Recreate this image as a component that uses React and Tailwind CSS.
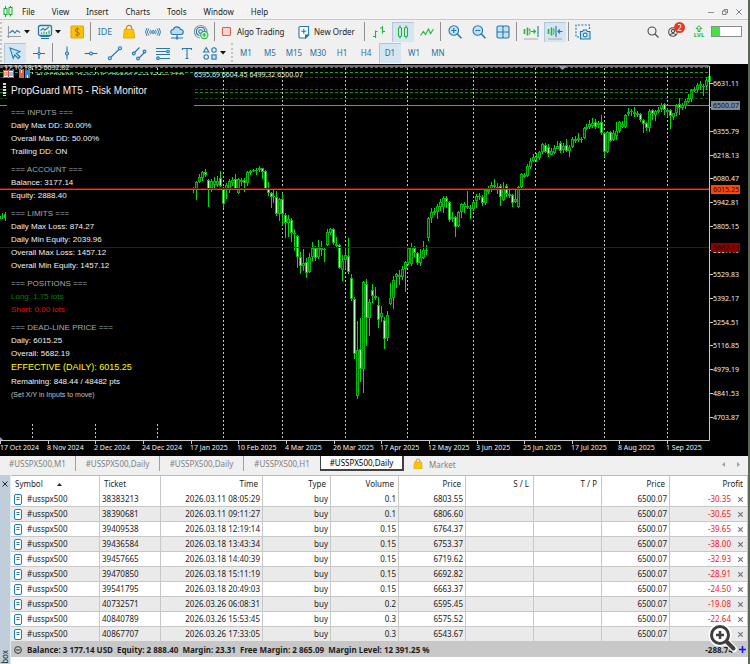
import React, { useState } from 'react';

const menuItems = ['File', 'View', 'Insert', 'Charts', 'Tools', 'Window', 'Help'];
const timeframes = ['M1', 'M5', 'M15', 'M30', 'H1', 'H4', 'D1', 'W1', 'MN'];

// y positions on the chart: high, body top, body bottom, low, falling
const candles = [
  [187, 188, 190, 193, 0], [181, 182, 189, 200, 0], [174, 177, 182, 183, 0], [171, 172, 178, 181, 0],
  [169, 172, 175, 177, 1], [179, 180, 189, 207, 1], [179, 181, 188, 192, 0], [177, 181, 185, 188, 0],
  [176, 181, 185, 187, 0], [171, 178, 186, 187, 1], [187, 188, 204, 208, 1], [183, 185, 189, 199, 0],
  [179, 181, 190, 193, 0], [177, 180, 183, 186, 0], [174, 179, 189, 190, 1], [178, 179, 193, 194, 0],
  [178, 180, 182, 186, 0], [178, 180, 183, 192, 1], [171, 172, 183, 186, 0], [170, 171, 173, 175, 0],
  [169, 170, 171, 172, 0], [168, 170, 171, 175, 0], [166, 168, 170, 172, 0], [168, 168, 172, 179, 1],
  [170, 171, 189, 190, 1], [182, 189, 193, 196, 1], [192, 193, 197, 208, 1], [190, 196, 197, 203, 0],
  [191, 197, 214, 216, 1], [198, 199, 214, 221, 0], [193, 199, 214, 225, 1], [213, 215, 223, 238, 1],
  [215, 219, 223, 237, 0], [218, 220, 233, 242, 1], [229, 233, 234, 251, 0], [235, 236, 257, 268, 1],
  [252, 257, 266, 274, 1], [249, 263, 266, 271, 0], [258, 262, 273, 278, 1], [253, 257, 272, 273, 0],
  [242, 248, 257, 261, 0], [246, 248, 258, 261, 1], [240, 248, 257, 259, 0], [241, 248, 250, 256, 0],
  [248, 249, 250, 262, 0], [229, 232, 245, 246, 0], [228, 229, 233, 235, 0], [228, 229, 243, 245, 1],
  [237, 244, 246, 248, 0], [244, 245, 268, 269, 1], [255, 261, 270, 281, 0], [248, 255, 260, 269, 0],
  [238, 256, 272, 274, 1], [274, 278, 299, 301, 1], [297, 299, 354, 359, 1], [321, 350, 396, 399, 0],
  [318, 349, 369, 382, 1], [281, 282, 369, 393, 0], [279, 284, 318, 346, 1], [299, 302, 318, 336, 0],
  [284, 290, 296, 303, 1], [287, 296, 298, 300, 1], [297, 305, 320, 328, 1], [306, 313, 317, 322, 0],
  [317, 320, 339, 349, 1], [311, 315, 338, 341, 0], [283, 298, 304, 305, 0], [276, 280, 298, 309, 0],
  [273, 274, 277, 288, 0], [270, 275, 277, 285, 0], [266, 269, 277, 280, 0], [261, 262, 269, 292, 0],
  [247, 248, 263, 265, 0], [243, 247, 264, 266, 0], [246, 248, 253, 257, 1], [252, 253, 263, 265, 1],
  [249, 257, 263, 266, 0], [241, 250, 258, 259, 0], [245, 250, 251, 255, 0], [217, 218, 238, 241, 0],
  [208, 212, 218, 223, 0], [208, 211, 213, 215, 0], [204, 206, 212, 219, 0], [199, 202, 207, 211, 0],
  [196, 198, 207, 213, 0], [196, 198, 202, 208, 1], [201, 202, 220, 222, 1], [212, 217, 219, 222, 0],
  [216, 217, 227, 237, 1], [211, 212, 226, 227, 0], [203, 204, 212, 218, 0], [202, 204, 207, 213, 0],
  [191, 206, 208, 209, 0], [205, 208, 209, 219, 0], [201, 202, 209, 211, 0], [194, 196, 201, 208, 0],
  [193, 196, 197, 200, 0], [195, 197, 203, 206, 1], [188, 190, 203, 205, 0], [186, 190, 192, 194, 0],
  [182, 185, 190, 192, 0], [179, 185, 187, 190, 0], [183, 187, 189, 194, 0], [184, 186, 197, 206, 1],
  [182, 189, 200, 201, 0], [184, 186, 194, 197, 1], [188, 194, 196, 198, 0], [194, 195, 203, 207, 1],
  [189, 199, 202, 203, 0], [186, 187, 207, 208, 0], [173, 174, 187, 188, 0], [173, 175, 177, 178, 0],
  [164, 166, 176, 177, 0], [158, 161, 167, 169, 0], [154, 157, 161, 162, 0], [153, 157, 158, 162, 0],
  [151, 152, 158, 160, 0], [143, 144, 152, 154, 0], [143, 145, 152, 153, 1], [144, 147, 154, 157, 1],
  [148, 151, 155, 155, 0], [145, 148, 153, 154, 0], [141, 146, 149, 149, 0], [141, 143, 151, 153, 1],
  [143, 146, 150, 153, 0], [139, 145, 151, 152, 1], [145, 147, 151, 157, 0], [137, 139, 147, 148, 0],
  [136, 139, 141, 143, 0], [133, 138, 140, 142, 0], [137, 139, 140, 143, 0], [127, 128, 138, 139, 0],
  [124, 127, 129, 130, 0], [120, 124, 127, 129, 0], [118, 123, 126, 128, 0], [119, 122, 127, 129, 1],
  [121, 123, 125, 128, 0], [115, 122, 133, 135, 1], [132, 133, 152, 157, 1], [131, 132, 152, 153, 0],
  [131, 132, 141, 142, 1], [130, 133, 140, 141, 0], [122, 131, 136, 140, 0], [121, 122, 131, 133, 0],
  [121, 124, 127, 128, 0], [114, 115, 127, 128, 0], [108, 112, 114, 116, 0], [109, 111, 112, 116, 0],
  [107, 112, 114, 117, 0], [111, 113, 115, 117, 0], [113, 114, 120, 122, 1], [119, 120, 124, 133, 1],
  [122, 123, 128, 131, 1], [109, 111, 128, 132, 0], [109, 110, 114, 120, 1], [110, 111, 115, 121, 0],
  [107, 110, 112, 113, 0], [103, 105, 109, 112, 0], [103, 104, 110, 115, 1], [108, 110, 112, 117, 0],
  [109, 110, 116, 129, 1], [113, 113, 117, 120, 0], [104, 106, 113, 116, 0], [98, 104, 108, 115, 1],
  [103, 105, 108, 110, 0], [99, 101, 106, 109, 0], [94, 98, 102, 103, 0], [89, 90, 99, 102, 0],
  [87, 89, 91, 92, 0], [83, 85, 90, 92, 0], [81, 84, 86, 90, 0], [84, 86, 87, 96, 0],
  [77, 80, 86, 90, 0], [74, 76, 82, 84, 0],
];

const priceLabels = [
  '6631.11', '', '6355.79', '6218.13', '6080.47', '5942.81', '5805.15', '5667.49',
  '5529.83', '5392.17', '5254.51', '5116.85', '4979.19', '4841.53', '4703.87',
];

const dateLabels = [
  '17 Oct 2024', '8 Nov 2024', '2 Dec 2024', '24 Dec 2024', '17 Jan 2025', '10 Feb 2025', '4 Mar 2025', '26 Mar 2025',
  '17 Apr 2025', '12 May 2025', '3 Jun 2025', '25 Jun 2025', '17 Jul 2025', '8 Aug 2025', '1 Sep 2025',
];

const separators = [32, 95, 157, 223, 282, 345, 407, 473, 535, 604, 667];

const levels = [
  [67, '#1fa01f'], [72, '#1fa01f'], [77, '#0c5f0c'], [89, '#0c6a0c'], [92, '#178c17'], [98, '#0a4f0a'],
];

const priceTags = [
  { y: 105, label: '6500.07', color: '#7a8a9c' },
  { y: 189, label: '6015.25', color: '#ff4500' },
  { y: 247, label: '5682.19', color: '#8b0000' },
];

const monitor = [
  { title: 'INPUTS', rows: ['Daily Max DD: 30.00%', 'Overall Max DD: 50.00%', 'Trailing DD: ON'] },
  { title: 'ACCOUNT', rows: ['Balance: 3177.14', 'Equity: 2888.40'] },
  { title: 'LIMITS', rows: ['Daily Max Loss: 874.27', 'Daily Min Equity: 2039.96', 'Overall Max Loss: 1457.12', 'Overall Min Equity: 1457.12'] },
  { title: 'POSITIONS', rows: ['Long: 1.75 lots', 'Short: 0.00 lots'] },
  { title: 'DEAD-LINE PRICE', rows: ['Daily: 6015.25', 'Overall: 5682.19'] },
];

const rowColor = (row) => {
  if (row.startsWith('Long')) return 'text-[#008000]';
  if (row.startsWith('Short')) return 'text-[#ff0000]';
  return 'text-[#f0f0f0]';
};

const positions = [
  ['38383213', '2026.03.11 08:05:29', '0.1', '6803.55', '-30.35'],
  ['38390681', '2026.03.11 09:11:27', '0.1', '6806.60', '-30.65'],
  ['39409538', '2026.03.18 12:19:14', '0.15', '6764.37', '-39.65'],
  ['39436584', '2026.03.18 13:43:34', '0.15', '6753.37', '-38.00'],
  ['39457665', '2026.03.18 14:40:39', '0.15', '6719.62', '-32.93'],
  ['39470850', '2026.03.18 15:11:19', '0.15', '6692.82', '-28.91'],
  ['39541795', '2026.03.18 20:49:03', '0.15', '6663.37', '-24.50'],
  ['40732571', '2026.03.26 06:08:31', '0.2', '6595.45', '-19.08'],
  ['40840789', '2026.03.26 15:53:45', '0.3', '6575.52', '-22.64'],
  ['40867707', '2026.03.26 17:33:05', '0.3', '6543.67', ''],
];

const Icon = ({ children, color = '#2478b0' }) => (
  <svg viewBox="0 0 16 16" className="size-4 shrink-0" fill="none" stroke={color} strokeWidth="1.1" aria-hidden="true">
    {children}
  </svg>
);

const Caret = () => (
  <svg viewBox="0 0 6 4" className="w-1.5 h-1 shrink-0" aria-hidden="true">
    <path d="M0 0h6L3 3.5z" fill="#111" />
  </svg>
);

const Tool = ({ label, active, children }) => (
  <button
    aria-label={label}
    className={`w-[22px] h-5 shrink-0 flex items-center justify-center ${active ? 'bg-[#d5e5f2] shadow-[inset_1px_1px_0_#b4c6d6]' : ''}`}
  >
    {children}
  </button>
);

const DropTool = ({ label, children }) => (
  <button aria-label={label} className="w-[29px] h-5 pl-0.5 gap-0.5 shrink-0 flex items-center">
    {children}
    <Caret />
  </button>
);

const Sep = () => <div className="w-px h-[19px] mr-px shrink-0 bg-[#909090]" />;
const Grip = () => <div className="w-0.5 h-[19px] shrink-0 border-l-2 border-dotted border-[#c4c4c4]" />;

const Bag = () => (
  <>
    <path d="M5.4 6V4a2.6 2.6 0 0 1 5.2 0v2" stroke="#c98e00" strokeWidth="1.2" />
    <path d="M3.4 5.4h9.2l1 8.6H2.4z" fill="#ffc400" stroke="#dba000" strokeWidth="0.8" />
  </>
);

const MenuBar = () => (
  <header className="h-5 flex items-center border-b border-[#c8c8c8] bg-[#f3f3f3] pt-1 pl-[3px] pr-1.5">
    <svg viewBox="0 0 10 11" className="w-2.5 h-[11px]" fill="none" stroke="#18b030" aria-hidden="true">
      <path d="M2.5 0v2M2.5 9v2M7.5 0v1.5M7.5 8.5v2" />
      <rect x="1" y="2.5" width="3" height="6" />
      <rect x="6" y="1.5" width="3" height="7" />
    </svg>
    <nav className="flex gap-[17px] pl-[9px] text-[#1c1c1c]">
      {menuItems.map(item => <button key={item}>{item}</button>)}
    </nav>
    <div className="ml-auto flex gap-2">
      <button aria-label="Minimize">
        <svg viewBox="0 0 6 6" className="size-1.5" stroke="#909090"><path d="M0 3.5h6" /></svg>
      </button>
      <button aria-label="Restore">
        <svg viewBox="0 0 6 6" className="size-1.5" stroke="#808080" fill="none"><path d="M.5 2h3.5v3.5H.5zM2 2V.5h3.5V4H4" /></svg>
      </button>
      <button aria-label="Close">
        <svg viewBox="0 0 6 6" className="size-1.5" stroke="#808080"><path d="M.3.3l5.4 5.4M5.7.3L.3 5.7" /></svg>
      </button>
    </div>
  </header>
);

const MainToolbar = () => (
  <div className="h-[23px] flex items-center gap-0.5 pr-1.5">
    <Grip />
    <DropTool label="New chart">
      <Icon>
        <path d="M2.5 2v12M1 12.5h14" stroke="#9a9a9a" />
        <path d="M3.5 9l3-2.5 2.5 2.5 2-2.5 3 2" />
      </Icon>
    </DropTool>
    <DropTool label="Profiles">
      <Icon>
        <rect x="1.5" y="1.5" width="13" height="10" rx="1.5" strokeWidth="1.3" />
        <path d="M4 14.5h8M3.5 12.5h9" />
        <path d="M3.5 6.5l2.5-2 2 1.5 4-3" />
        <path d="M4.5 10V8.5M7 10V7.5M9.5 10V8M12 10V6.5" stroke="#22b43c" />
      </Icon>
    </DropTool>
    <Tool label="Deposit">
      <Icon>
        <rect x="2" y="2" width="12.5" height="12" rx="1" fill="#ffc107" stroke="#e0a500" />
        <path d="M10.3 5.5C9.8 4.8 9 4.6 8.2 4.6c-1.2 0-2 .6-2 1.6 0 2.3 4.2 1.2 4.2 3.5 0 1-.9 1.7-2.2 1.7-1 0-1.9-.4-2.3-1.2M8.2 3.4v9.2" stroke="#94690a" strokeWidth="0.9" />
      </Icon>
    </Tool>
    <Sep />
    <Tool label="MetaEditor IDE"><span className="text-[9px] text-[#2478b0]">IDE</span></Tool>
    <Tool label="Market"><Icon><Bag /></Icon></Tool>
    <Tool label="Signals">
      <Icon>
        <circle cx="8" cy="8" r="1.3" />
        <path d="M5.7 5.8a3.2 3.2 0 0 0 0 4.4M10.3 5.8a3.2 3.2 0 0 1 0 4.4M3.8 4.5a5.5 5.5 0 0 0 0 7M12.2 4.5a5.5 5.5 0 0 1 0 7M1.9 4a7 7 0 0 0 0 8M14.1 4a7 7 0 0 1 0 8" strokeWidth="0.9" />
      </Icon>
    </Tool>
    <Tool label="Virtual hosting">
      <Icon>
        <path d="M4.3 10.5a2.5 2.5 0 0 1 0-5 3.8 3.8 0 0 1 7.2 0 2.5 2.5 0 0 1 .5 5z" fill="#b9dcf2" />
        <path d="M8 10.5v3M2 14h4.5M9.5 14H14" />
        <circle cx="8" cy="14" r="1" />
      </Icon>
    </Tool>
    <Tool label="VPS">
      <Icon>
        <path d="M14 8A6.3 6.3 0 1 0 7 14" stroke="#7b98ab" />
        <path d="M11.8 7A4.2 4.2 0 1 0 6.5 11.5" />
        <circle cx="7.6" cy="7.5" r="1.8" />
        <circle cx="11.3" cy="11" r="3.6" fill="#d9f7dd" stroke="#22b43c" />
        <path d="M11.3 9v4M9.3 11h4" stroke="#22b43c" />
      </Icon>
    </Tool>
    <Sep />
    <button className="w-[74px] h-5 pl-1 shrink-0 flex items-center gap-1.5 whitespace-nowrap">
      <span className="size-[9px] rounded-[1px] border border-[#dc5a4c] bg-[#fbd3cd]" />
      Algo Trading
    </button>
    <button className="w-[68px] h-5 pl-0.5 shrink-0 flex items-center gap-0.5 whitespace-nowrap">
      <Icon>
        <path d="M4 2.5h8.5v8.5l-3 3H4q-1 0-1-1v-9.5q0-1 1-1z" fill="#fff" />
        <path d="M12.5 11h-3v3z" fill="#2478b0" />
        <path d="M7.8 4.8v5M5.3 7.3h5" />
      </Icon>
      New Order
    </button>
    <Sep />
    <Tool label="Bar chart">
      <Icon color="#22b43c">
        <path d="M4.5 6.5v7.5M2 12.5h2.5M4.5 7.5h2M11.5 2v7.5M9 4h2.5M11.5 7.5h2.5" />
      </Icon>
    </Tool>
    <Tool label="Candlesticks" active>
      <Icon color="#22b43c">
        <path d="M5 1.5v2M5 12.5v2M11 1.5v2M11 12.5v2" />
        <rect x="3.5" y="3.5" width="3" height="9" rx="1" />
        <rect x="9.5" y="3.5" width="3" height="9" rx="1" />
      </Icon>
    </Tool>
    <Tool label="Line chart">
      <Icon color="#22b43c"><path d="M1.5 11.5l3-4 2 3 3-5.5 2 4.5 3-4.5" /></Icon>
    </Tool>
    <Sep />
    <Tool label="Zoom in">
      <Icon>
        <circle cx="6.8" cy="6.5" r="4.8" fill="#c5e2f4" />
        <path d="M10.4 10l4 4.2" strokeWidth="1.6" />
        <path d="M6.8 4v5M4.3 6.5h5" />
      </Icon>
    </Tool>
    <Tool label="Zoom out">
      <Icon>
        <circle cx="6.8" cy="6.5" r="4.8" fill="#c5e2f4" />
        <path d="M10.4 10l4 4.2" strokeWidth="1.6" />
        <path d="M4.3 6.5h5" />
      </Icon>
    </Tool>
    <Tool label="Tile windows">
      <Icon>
        <rect x="2" y="2" width="12" height="12" rx="1.5" fill="#c5e2f4" />
        <path d="M8 2v12M2 8h12" />
      </Icon>
    </Tool>
    <Sep />
    <Tool label="Auto scroll">
      <Icon color="#22b43c">
        <path d="M1.5 5v5M4.5 3.5v8" strokeWidth="1.6" />
        <path d="M6.5 4.5q1.2 3 0 6M8 7.5h4.5M10.5 5.5l2 2-2 2" />
        <path d="M15 2v11" stroke="#2478b0" />
        <path d="M1 15h14" stroke="#b0b0b0" />
      </Icon>
    </Tool>
    <Tool label="Chart shift" active>
      <Icon color="#22b43c">
        <path d="M1.5 5v5M4.5 3.5v8" strokeWidth="1.6" />
        <path d="M6.5 4.5q1.2 3 0 6" />
        <path d="M9 2v11M15.5 7.5h-4.5M13 5.5l-2 2 2 2" stroke="#2478b0" />
        <path d="M1 15h14" stroke="#b0b0b0" />
      </Icon>
    </Tool>
    <Sep />
    <Tool label="Screenshot">
      <Icon>
        <path d="M4 13H1V1h13.5v4" strokeDasharray="2 1.4" />
        <path d="M5.5 7.5h2l1-1.5h3l1 1.5h2.5v7.5h-9.5z" fill="#c5e2f4" />
        <circle cx="10.2" cy="11" r="1.9" fill="#fff" />
      </Icon>
    </Tool>
    <div className="ml-auto flex items-center">
      <button aria-label="Search" className="w-6 flex justify-center">
        <Icon color="#4a4a4a">
          <circle cx="7" cy="7" r="4" />
          <path d="M10 10l3.5 3.5" />
        </Icon>
      </button>
      <button aria-label="Notifications" className="relative w-6 flex items-center">
        <Icon color="#4a4a4a">
          <circle cx="8" cy="8" r="4.3" />
          <circle cx="8" cy="7" r="1.6" />
          <path d="M5 11q3-3 6 0" />
        </Icon>
        <span className="absolute left-[9px] -top-0.5 size-[11px] rounded-full bg-[#e23b24] text-white leading-[11px] text-center">2</span>
      </button>
      <button aria-label="Level" className="w-5 flex flex-col items-center text-[#22b43c] text-[6px] leading-[6px] font-bold">
        <svg viewBox="0 0 8 7" className="w-2 h-[7px]" fill="none" stroke="#22b43c"><path d="M4 .7L6.8 3.5H5v3H3v-3H1.2z" /></svg>
        LVL
      </button>
      <div className="w-[31px] h-[11px] ml-0.5 border border-[#8c8c8c] bg-white">
        <div className="w-2 h-full bg-[#44e044]" />
      </div>
    </div>
  </div>
);

const DrawToolbar = ({ timeframe, setTimeframe }) => (
  <div className="h-[21px] flex items-start gap-0.5">
    <Grip />
    <Tool label="Cursor" active>
      <Icon><path d="M3 3l10 3.5-3.5 1.8 3.5 3.5-1.7 1.7-3.5-3.5-1.6 3.3z" fill="#c5e2f4" /></Icon>
    </Tool>
    <Tool label="Crosshair">
      <Icon><path d="M8 2v12M2 8.5h12" /><circle cx="8" cy="8.5" r="1.2" fill="#f0f0f0" /></Icon>
    </Tool>
    <Sep />
    <Tool label="Vertical line">
      <Icon><path d="M8 1.5v13" /><circle cx="8" cy="8.5" r="1.5" fill="#c5e2f4" /></Icon>
    </Tool>
    <Tool label="Horizontal line">
      <Icon><path d="M1.5 8.5h13" /><circle cx="8" cy="8.5" r="1.5" fill="#c5e2f4" /></Icon>
    </Tool>
    <Tool label="Trendline">
      <Icon><path d="M3 13L13 3.5" /><circle cx="2.8" cy="13.2" r="1.5" fill="#c5e2f4" /><circle cx="13" cy="3.2" r="1.5" fill="#c5e2f4" /></Icon>
    </Tool>
    <Tool label="Channel">
      <Icon>
        <path d="M2.5 8.5l6-6M7.5 13.5L14 7" />
        <circle cx="2.8" cy="8.5" r="1.4" fill="#c5e2f4" /><circle cx="13.5" cy="6.5" r="1.4" fill="#c5e2f4" /><circle cx="7" cy="13.5" r="1.4" fill="#c5e2f4" />
      </Icon>
    </Tool>
    <Tool label="Fibonacci">
      <Icon>
        <path d="M1 3.5h14M1 6.5h10M1 9.5h14M5 13.5h10" />
        <circle cx="13" cy="6.5" r="1.3" fill="#c5e2f4" /><circle cx="3" cy="13.2" r="1.3" fill="#c5e2f4" />
      </Icon>
    </Tool>
    <Tool label="Text"><Icon><path d="M3.5 5V3.5h9V5M8 3.5v10M6.5 13.5h3" /></Icon></Tool>
    <DropTool label="Objects">
      <Icon>
        <path d="M4.2 2.5L6.8 7H1.6z" />
        <circle cx="12" cy="5" r="2.2" />
        <circle cx="4.2" cy="12" r="2.2" />
        <rect x="9.9" y="9.9" width="4.2" height="4.2" fill="#c5e2f4" />
      </Icon>
    </DropTool>
    <Grip />
    {timeframes.map(tf => (
      <button
        key={tf}
        onClick={() => setTimeframe(tf)}
        className={`w-[22px] h-5 shrink-0 text-center text-[#2a6f9e] ${tf === timeframe ? 'bg-[#d5e5f2] shadow-[inset_1px_1px_0_#b4c6d6]' : ''}`}
      >
        {tf}
      </button>
    ))}
  </div>
);

const Candles = () => (
  <g shapeRendering="crispEdges">
    {candles.map(([high, top, bottom, low, falling], index) => {
      const x = Math.round(193 + index * 2.981);
      const height = Math.max(bottom - top, 1);
      return (
        <g key={index}>
          <rect x={x} y={high} width="1" height={low - high} fill="#00dc0a" />
          <rect x={x - 1} y={top} width={3} height={height} fill={falling ? '#14b414' : '#00b80a'} />
          {height > 2 && (
            <rect x={x} y={top + 1} width="1" height={height - 2} fill={falling ? '#b8ffb8' : '#004600'} />
          )}
        </g>
      );
    })}
  </g>
);

const Chart = () => (
  <section className="relative bg-black" aria-label="#USSPX500 Daily chart">
    <svg viewBox="0 64 748 392" className="block w-full" fontFamily='"Noto Sans", sans-serif' fontSize="7">
      <rect x="0" y="65" width="709" height="2" fill="#6e6e6e" />
      {levels.map(([y, color]) => (
        <path key={y} d={`M0 ${y + 0.5}H709`} stroke={color} strokeDasharray="3 2" />
      ))}
      {separators.map(x => (
        <path key={x} d={`M${x + 0.5} 68V440`} stroke="#c4c4c4" strokeDasharray="2 2" />
      ))}
      <path d="M0 105.5H709" stroke="#788694" />
      <path d="M558 66h9l-4.5 4z" fill="#8e9bab" />

      {/* symbol caption, partly under the monitor panel */}
      <text x="4" y="70" fill="#e8e8e8">17.10.18:15 6632.82</text>
      <text x="36" y="78" fill="#e8e8e8">#USSPX500, Daily: US SPX500 Spot Index CFD</text>
      <rect x="7" y="75" width="187" height="348" fill="#000" />
      <text x="194" y="77" fill="#f0f0f0">6595.69 6604.45 6499.32 6500.07</text>
      <rect x="3" y="70" width="11" height="8" fill="#fff" />
      <path d="M3.5 70.5h5v7h-5zM4 73h4M4 75h4" stroke="#d8483c" fill="none" />
      <path d="M9 70.5h4.5v7H9M9 73h4M9 75h4" stroke="#3a78b8" fill="none" />
      <rect x="19" y="70" width="5" height="8" fill="#e0604e" />
      <rect x="25" y="70" width="5" height="8" fill="#3a88c0" />
      <path d="M21.5 70v3M27.5 75v3" stroke="#fff" />
      <path d="M4.5 83v13" stroke="#ddd" strokeWidth="3" strokeDasharray="2 1" />
      <path d="M.5 216v3M2.500 213v6M4.500 214v4M5.500 212v9" stroke="#00dc0a" />

      <Candles />

      <path d="M0 247.5H709" stroke="#6e0000" />
      <path d="M0 188.5H709" stroke="#7a0c00" />
      <path d="M0 189.5H709" stroke="#ff3a12" />

      {/* axes */}
      <path d="M709.5 66V440.5H0" stroke="#c8c8c8" fill="none" />
      <path d="M0 437l3 3H0z" fill="#8e9bab" />
      {priceLabels.map((label, index) => {
        const y = Math.round(83 + index * 23.85);
        return (
          <g key={index}>
            <path d={`M710 ${y + 0.5}h3`} stroke="#c8c8c8" />
            <text x="713" y={y + 3} fill="#f0f0f0">{label}</text>
          </g>
        );
      })}
      {priceTags.map(tag => (
        <g key={tag.label}>
          <rect x="711" y={tag.y - 4} width="29" height="9" fill={tag.color} />
          <text x="713" y={tag.y + 3} fill="#111">{tag.label}</text>
        </g>
      ))}
      {dateLabels.map((label, index) => {
        const x = Math.round(index * 47.65);
        return (
          <g key={label}>
            <path d={`M${x + 0.5} 441v3`} stroke="#c8c8c8" />
            <text x={index === 0 ? 0 : x - 1} y="450" fill="#f0f0f0">{label}</text>
          </g>
        );
      })}
    </svg>

    {/* PropGuard overlay */}
    <div className="absolute left-[11px] top-5 font-['Liberation_Sans',Arial,sans-serif] leading-[13px] text-[#f0f0f0]">
      <h1 className="text-[10px] leading-[14px] mb-2">PropGuard MT5 - Risk Monitor</h1>
      {monitor.map(section => (
        <div key={section.title} className="mb-[5px] last-of-type:mb-0">
          <h2 className="text-[#a8a8a8]">=== {section.title} ===</h2>
          {section.rows.map(row => <p key={row} className={rowColor(row)}>{row}</p>)}
        </div>
      ))}
      <p className="text-[9px] leading-[15px] text-[#ffff00]">EFFECTIVE (DAILY): 6015.25</p>
      <p>Remaining: 848.44 / 48482 pts</p>
      <p className="text-[7px] text-[#c0c0c0]">(Set X/Y in Inputs to move)</p>
    </div>
  </section>
);

const ChartTabs = () => (
  <nav className="h-[19px] flex items-start bg-[#f0f0f0] text-[#808080] leading-[15px]">
    <button className="w-[76px] h-[15px] shrink-0 border-r border-[#a0a0a0]">#USSPX500,M1</button>
    <button className="w-[84px] h-[15px] shrink-0 border-r border-[#a0a0a0]">#USSPX500,Daily</button>
    <button className="w-[84px] h-[15px] shrink-0 border-r border-[#a0a0a0]">#USSPX500,Daily</button>
    <button className="w-[76px] h-[15px] shrink-0">#USSPX500,H1</button>
    <button className="w-[84px] h-[15px] shrink-0 border-l border-r-2 border-b-2 border-[#404040] bg-white text-black leading-[14px]">#USSPX500,Daily</button>
    <button className="h-4 ml-2 shrink-0 flex items-center gap-[5px]">
      <svg viewBox="0 0 16 16" className="size-3" fill="none" aria-hidden="true"><Bag /></svg>
      Market
    </button>
    <div className="ml-auto mr-2 h-4 flex items-center gap-3">
      <button aria-label="Previous tab"><svg viewBox="0 0 3 5" className="w-[3px] h-[5px]"><path d="M3 0v5L0 2.5z" fill="#a0a0a0" /></svg></button>
      <button aria-label="Next tab"><svg viewBox="0 0 3 5" className="w-[3px] h-[5px]"><path d="M0 0v5l3-2.5z" fill="#a0a0a0" /></svg></button>
    </div>
  </nav>
);

const Th = ({ children }) => (
  <th className="border-r border-[#c8c8c8] pr-1 text-right font-normal">{children}</th>
);

const Td = ({ children }) => (
  <td className="border-r border-b border-[#c8c8c8] pr-0.5 text-right">{children}</td>
);

const Toolbox = () => (
  <section className="flex bg-white text-[#1c1c1c]">
    <aside className="w-[11px] shrink-0 flex flex-col items-center justify-between bg-[#c0cddb] border-r border-[#e4e9ee] pt-1.5">
      <button aria-label="Close toolbox">
        <svg viewBox="0 0 6 6" className="size-1.5" stroke="#222"><path d="M.5.5l5 5M5.5.5l-5 5" /></svg>
      </button>
      <span className="[writing-mode:vertical-rl] rotate-180 leading-[10px]">box</span>
    </aside>
    <div className="flex-1 min-w-0 pb-[7px]">
      <table className="w-full table-fixed border-separate border-spacing-0 border-t border-[#b8b8b8]">
        <colgroup>
          <col className="w-[89px]" />
          <col className="w-[61px]" />
          <col className="w-[102px]" />
          <col className="w-[68px]" />
          <col className="w-[68px]" />
          <col className="w-[67px]" />
          <col className="w-[68px]" />
          <col className="w-[68px]" />
          <col className="w-[68px]" />
          <col />
        </colgroup>
        <thead>
          <tr className="h-4">
            <th className="border-r border-[#c8c8c8] pl-1 text-left font-normal">
              <span className="flex items-center gap-3.5">
                Symbol
                <svg viewBox="0 0 5 3" className="w-[5px] h-[3px]"><path d="M0 3h5L2.5 0z" fill="#222" /></svg>
              </span>
            </th>
            <th className="border-r border-[#c8c8c8] pl-1 text-left font-normal">Ticket</th>
            <Th>Time</Th>
            <Th>Type</Th>
            <Th>Volume</Th>
            <Th>Price</Th>
            <Th>S / L</Th>
            <Th>T / P</Th>
            <Th>Price</Th>
            <Th>Profit</Th>
          </tr>
        </thead>
        <tbody>
          {positions.map(([ticket, time, volume, price, profit]) => (
            <tr key={ticket} className="h-[15px] leading-[14px] even:bg-[#eaeaea]">
              <td className="border-r border-b border-[#c8c8c8] pl-[3px]">
                <span className="flex items-center gap-[5px]">
                  <svg viewBox="0 0 8 11" className="w-2 h-[11px]" fill="#fff" stroke="#2478b0" aria-hidden="true">
                    <rect x=".5" y=".5" width="7" height="10" rx="1.5" />
                    <path d="M2.5 3.5h3M2.5 5.5h3" />
                  </svg>
                  #usspx500
                </span>
              </td>
              <td className="border-r border-b border-[#c8c8c8] pl-0.5">{ticket}</td>
              <Td>{time}</Td>
              <Td>buy</Td>
              <Td>{volume}</Td>
              <Td>{price}</Td>
              <Td />
              <Td />
              <Td>6500.07</Td>
              <Td>
                <span className="flex items-center justify-end gap-[7px] pr-0.5 text-[#f0201c]">
                  {profit}
                  <button aria-label={`Close ${ticket}`}>
                    <svg viewBox="0 0 5 5" className="size-[5px]" stroke="#707070" strokeWidth="1.2"><path d="M.3.3l4.4 4.4M4.7.3L.3 4.7" /></svg>
                  </button>
                </span>
              </Td>
            </tr>
          ))}
        </tbody>
      </table>
      <div className="relative h-[15px] flex items-center bg-[#c8c8c8] pl-[3px] pr-0.5 font-bold whitespace-pre">
        <svg viewBox="0 0 8 8" className="size-2 mr-[5px]" fill="none" stroke="#333"><circle cx="4" cy="4" r="3.4" /><path d="M2 4h4" /></svg>
        <span>{'Balance: 3 177.14 USD  Equity: 2 888.40  Margin: 23.31  Free Margin: 2 865.09  Margin Level: 12 391.25 %'}</span>
        <span className="ml-auto mr-1.5">-288.74</span>
        <button aria-label="Add">
          <svg viewBox="0 0 7 7" className="size-[7px]" stroke="#1010ff" strokeWidth="1.5"><path d="M3.5 0v7M0 3.5h7" /></svg>
        </button>
        <button aria-label="Enlarge" className="absolute right-[10px] bottom-1">
          <svg viewBox="0 0 30 30" className="size-[30px]" fill="none" strokeLinecap="round">
            <circle cx="12" cy="12" r="8.5" stroke="#fff" strokeWidth="6" />
            <path d="M19 19l7 7" stroke="#fff" strokeWidth="6.5" />
            <circle cx="12" cy="12" r="8.5" fill="#fff" stroke="#3e3e3e" strokeWidth="3" />
            <path d="M19 19l6.5 6.5" stroke="#3e3e3e" strokeWidth="4" />
            <path d="M12 8v8M8 12h8" stroke="#3e3e3e" strokeWidth="2.5" strokeLinecap="butt" />
          </svg>
        </button>
      </div>
    </div>
  </section>
);

export default function App() {
  const [timeframe, setTimeframe] = useState('D1');

  return (
    <div className="bg-[#5c6656] pr-0.5">
      <main className="bg-[#f0f0f0] text-[8px] leading-[12px] text-[#1c1c1c] font-['Noto_Sans','Open_Sans',sans-serif]">
        <MenuBar />
        <MainToolbar />
        <DrawToolbar timeframe={timeframe} setTimeframe={setTimeframe} />
        <Chart />
        <ChartTabs />
        <Toolbox />
      </main>
    </div>
  );
}
